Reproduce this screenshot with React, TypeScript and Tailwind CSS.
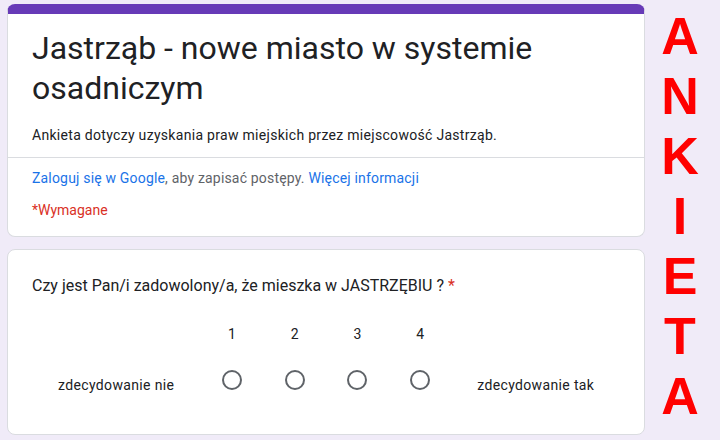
export default function App() {
  const letters = ["A", "N", "K", "I", "E", "T", "A"];
  return (
    <div className="w-[720px] h-[440px] bg-[#f0ebf8] flex overflow-hidden" style={{ fontFamily: "Roboto, 'Noto Sans', sans-serif" }}>
      <div className="w-[638px] ml-[7px] pt-[4px] flex flex-col shrink-0">
        <div className="bg-white rounded-lg border border-[#dadce0] border-t-[10px] border-t-[#673ab7] overflow-hidden">
          <div className="px-6 pt-[14px] pb-[12px]">
            <h1 className="text-[32px] leading-10 font-normal text-[#202124]">Jastrząb - nowe miasto w systemie osadniczym</h1>
            <p className="mt-[17px] text-[14px] leading-5 tracking-[0.3px] text-[#202124]">Ankieta dotyczy uzyskania praw miejskich przez miejscowość Jastrząb.</p>
          </div>
          <div className="border-t border-[#dadce0] px-6 pt-[10px] pb-[16px] text-[14px] leading-5">
            <p className="text-[#5f6368] tracking-[0.18px]">
              <span className="text-[#1a73e8]">Zaloguj się w Google</span>, aby zapisać postępy. <span className="text-[#1a73e8]">Więcej informacji</span>
            </p>
            <p className="mt-3 text-[#d93025]">*Wymagane</p>
          </div>
        </div>
        <div className="mt-3 bg-white rounded-lg border border-[#dadce0] px-6 pt-6 pb-[39px]">
          <p className="text-[16px] leading-6 text-[#202124]">
            Czy jest Pan/i zadowolony/a, że mieszka w JASTRZĘBIU ? <span className="text-[#d93025]">*</span>
          </p>
          <div className="mt-[26px] flex items-end text-[14px] leading-5 text-[#202124]">
            <div className="w-[169px] text-center tracking-[0.35px]">zdecydowanie nie</div>
            {[1, 2, 3, 4].map((n) => (
              <div key={n} className="w-[63px] flex flex-col items-center">
                <div>{n}</div>
                <div className="mt-[26px] mb-[5px] w-5 h-5 rounded-full border-2 border-[#5f6368]" />
              </div>
            ))}
            <div className="w-[169px] text-center tracking-[0.35px]">zdecydowanie tak</div>
          </div>
        </div>
      </div>
      <div className="w-[70px] pt-[6px] flex flex-col items-center shrink-0" style={{ fontFamily: "'Liberation Sans', Arial, sans-serif" }}>
        {letters.map((l, i) => (
          <div key={i} className="text-[52px] leading-[60px] font-bold text-[#ff0000]">{l}</div>
        ))}
      </div>
    </div>
  );
}
